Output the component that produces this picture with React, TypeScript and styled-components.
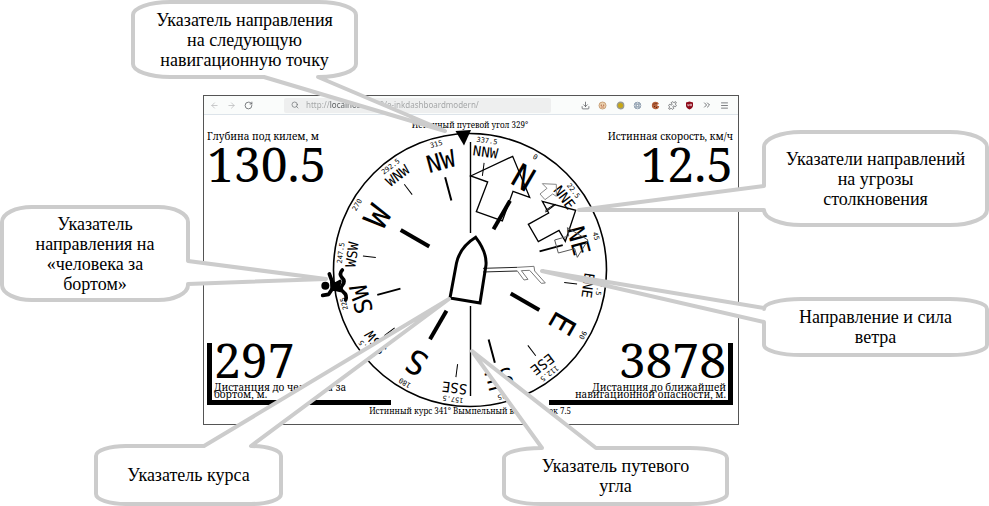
import React from "react";
import styled, { createGlobalStyle } from "styled-components";
import {
  ArrowLeft,
  ArrowRight,
  RotateCw,
  Search,
  Download,
  ChevronsRight,
  Menu,
  Puzzle,
} from "lucide-react";

const GlobalStyle = createGlobalStyle`
  *, *::before, *::after { box-sizing: border-box; }
  body { margin: 0; background: #fff; color: #000; }
`;

const serif = `"Noto Serif", "Droid Serif", "Liberation Serif", serif`;

const Stage = styled.main`
  position: relative;
  min-height: 506px;
  padding-top: 95px;
  overflow: hidden;
`;

const BrowserWindow = styled.section`
  width: 536px;
  margin-left: calc(round(down, 50%, 1px) - 291px);
  border: 1px solid #555;
  background: #fff;
  font-family: ${serif};
`;

const Toolbar = styled.header`
  display: flex;
  align-items: center;
  height: 19px;
  padding: 0 5px 0 2px;
  background: #fafcfb;
  border-bottom: 1px solid #dde4ea;
`;

const Extensions = styled.div`
  display: flex;
  justify-content: space-between;
  width: 156px;
`;

const ToolButton = styled.button<{ $dim?: boolean }>`
  display: flex;
  align-items: center;
  justify-content: center;
  width: 17px;
  height: 16px;
  padding: 0;
  border: 0;
  background: none;
  color: ${(p) => (p.$dim ? "#b8babb" : "#55585c")};
`;

const AddressBar = styled.label`
  display: flex;
  align-items: center;
  gap: 7px;
  flex: 1;
  height: 15px;
  margin: 0 26px 0 27px;
  padding-left: 7px;
  border-radius: 2px;
  background: #eeefef;
  color: #66696c;
`;

const AddressInput = styled.input`
  flex: 1;
  min-width: 0;
  padding: 0;
  border: 0;
  outline: 0;
  font: 8px/14px "Noto Sans", sans-serif;
  color: transparent;
  background: linear-gradient(90deg, #a0a2a3 24px, #55585a 24px, #55585a 60px, #a0a2a3 60px);
  -webkit-background-clip: text;
  background-clip: text;
`;

const Dashboard = styled.div`
  display: grid;
  grid-template-columns: 1fr 1fr;
  grid-template-rows: auto 1fr;
  padding: 4px 5px 7px 3px;
`;

const Instrument = styled.div`
  grid-area: 1 / 1 / 3 / 3;
  display: flex;
  flex-direction: column;
  align-items: center;
`;

const Caption = styled.p`
  margin: 0;
  font-size: 8px;
  line-height: 12px;
  white-space: nowrap;
`;

const Dial = styled.svg`
  display: block;
  width: 300px;
  height: 274px;
  overflow: visible;
`;

const Mark = styled.text<{ $size: number }>`
  font-family: "DejaVu Sans Mono", monospace;
  font-size: ${(p) => p.$size}px;
  text-anchor: middle;
`;

const Readout = styled.div<{ $end?: boolean }>`
  padding-top: 10px;
  text-align: ${(p) => (p.$end ? "right" : "left")};
  grid-area: 1 / ${(p) => (p.$end ? 2 : 1)};
`;

const ReadoutLabel = styled.div`
  font-size: 10px;
  line-height: 14px;
`;

const Value = styled.div`
  font-size: 48px;
  line-height: 41px;
`;

const FramedReadout = styled.div<{ $end?: boolean }>`
  grid-area: 2 / ${(p) => (p.$end ? 2 : 1)};
  align-self: end;
  justify-self: ${(p) => (p.$end ? "end" : "start")};
  width: 184px;
  margin-bottom: 12px;
  padding: 0 2px;
  border: solid #000;
  border-width: ${(p) => (p.$end ? "0 5px 5px 0" : "0 0 5px 5px")};
  text-align: ${(p) => (p.$end ? "right" : "left")};
`;

const FramedValue = styled.div`
  font-size: 48px;
  line-height: 34px;
`;

const FramedLabel = styled.div`
  font-size: 10px;
  line-height: 7px;
  padding: 7px 0 2px;
  white-space: nowrap;
`;

const CalloutBox = styled.aside<{ $x: number; $y: number; $w: number; $h: number }>`
  position: absolute;
  left: calc(round(down, 50%, 1px) + ${(p) => p.$x}px);
  top: ${(p) => p.$y}px;
  width: ${(p) => p.$w}px;
  height: ${(p) => p.$h}px;
  display: flex;
  align-items: center;
  justify-content: center;
`;

const Outline = styled.svg`
  position: absolute;
  inset: 0;
  overflow: visible;
  fill: #fff;
  stroke: #ccc;
  stroke-width: 4;
  stroke-linejoin: round;
  pointer-events: none;
`;

const CalloutText = styled.p`
  position: relative;
  margin: 0;
  font: 18px/20px "Liberation Serif", serif;
  text-align: center;
  white-space: nowrap;
`;

type Pt = [number, number];

interface CalloutSpec {
  x: number;
  y: number;
  w: number;
  h: number;
  rx: number;
  ry: number;
  side: "top" | "bottom" | "left" | "right";
  pointer: [Pt, Pt, Pt];
  lines: string[];
}

function bubblePath({ w, h, rx, ry, side, pointer }: CalloutSpec) {
  const tail = pointer.map(([px, py]) => `L${px} ${py}`).join(" ");
  const at = (s: CalloutSpec["side"]) => (s === side ? tail : "");
  const arc = (x: number, y: number) => `A${rx} ${ry} 0 0 1 ${x} ${y}`;
  return [
    `M${rx} 0`, at("top"), `L${w - rx} 0`, arc(w, ry),
    at("right"), `L${w} ${h - ry}`, arc(w - rx, h),
    at("bottom"), `L${rx} ${h}`, arc(0, h - ry),
    at("left"), `L0 ${ry}`, arc(rx, 0), "Z",
  ].join(" ");
}

function Callout(spec: CalloutSpec) {
  return (
    <CalloutBox $x={spec.x} $y={spec.y} $w={spec.w} $h={spec.h}>
      <Outline width={spec.w} height={spec.h} aria-hidden="true">
        <path d={bubblePath(spec)} />
      </Outline>
      <CalloutText>
        {spec.lines.map((line, i) => (
          <React.Fragment key={line}>
            {i > 0 && <br />}
            {line}
          </React.Fragment>
        ))}
      </CalloutText>
    </CalloutBox>
  );
}

const callouts: CalloutSpec[] = [
  {
    x: -361, y: 2, w: 223, h: 75, rx: 37, ry: 13, side: "bottom",
    pointer: [[185, 75], [312, 129], [131, 75]],
    lines: ["Указатель направления", "на следующую", "навигационную точку"],
  },
  {
    x: -492, y: 207, w: 186, h: 93, rx: 30, ry: 15, side: "right",
    pointer: [[186, 54], [324, 72], [186, 77]],
    lines: ["Указатель", "направления на", "«человека за", "бортом»"],
  },
  {
    x: -398, y: 446, w: 185, h: 58, rx: 30, ry: 10, side: "top",
    pointer: [[108, 0], [353, -147], [155, 0]],
    lines: ["Указатель курса"],
  },
  {
    x: 10, y: 448, w: 223, h: 56, rx: 37, ry: 10, side: "top",
    pointer: [[38, 0], [-32, -97], [92, 0]],
    lines: ["Указатель путевого", "угла"],
  },
  {
    x: 270, y: 132, w: 223, h: 93, rx: 37, ry: 15, side: "left",
    pointer: [[0, 78], [-185, 78], [0, 54]],
    lines: ["Указатели направлений", "на угрозы", "столкновения"],
  },
  {
    x: 270, y: 299, w: 223, h: 56, rx: 37, ry: 10, side: "left",
    pointer: [[0, 23], [-222, -28], [0, 9]],
    lines: ["Направление и сила", "ветра"],
  },
];

const points = [
  "N", "NNE", "NE", "ENE", "E", "ESE", "SE", "SSE",
  "S", "SSW", "SW", "WSW", "W", "WNW", "NW", "NNW",
];

const markStyles = {
  1: { size: 33, base: 95, from: 47, to: 80, stroke: 4 },
  2: { size: 24, base: 104, from: 72, to: 96, stroke: 2 },
  3: { size: 14, base: 114, from: 95, to: 108, stroke: 1 },
} as const;

function CompassRose() {
  return (
    <g transform="translate(471 270) rotate(30)">
      {points.map((name, i) => {
        const m = markStyles[name.length as 1 | 2 | 3];
        return (
          <g key={name} transform={`rotate(${i * 22.5})`}>
            <line y1={-m.from} y2={-m.to} stroke="#000" strokeWidth={m.stroke} />
            <Mark $size={m.size} y={-m.base}>{name}</Mark>
            <Mark $size={7} y={-128}>{String(i * 22.5)}</Mark>
          </g>
        );
      })}
    </g>
  );
}

function DialFace() {
  return (
    <Dial viewBox="321 131 300 274" role="img" aria-label="Компас">
      <circle cx="471" cy="270" r="136.5" fill="none" stroke="#000" strokeWidth="1.6" />
      <path d="M471.5 142V233M471.5 306V396" stroke="#000" strokeWidth="1.4" />
      <CompassRose />
      {/* collision threats */}
      <g transform="translate(465 125) scale(.33333)" fill="none" stroke="#000" strokeWidth="4">
        <path d="M20 153 146 94 197 217 147 199 115 288 37 260 71 171Z" />
        <path d="M235 229 335 256 304 349 285 316 223 350 193 298 254 264Z" />
        <path d="M244 256 272 238" strokeWidth="3" />
        <path d="M235 176 277 178 277 214 266 207 243 224 228 207 249 190Z" stroke="#888" strokeWidth="3" />
        <path d="M272 345 314 333 310 308 372 345 340 397 332 371 283 384Z" stroke="#555" strokeWidth="3" />
      </g>
      {/* wind barb */}
      <g transform="translate(465 260) scale(.33333)" fill="none" strokeWidth="3">
        <path d="M57 25 160 22M57 36 160 33" stroke="#222" />
        <path d="M160 22 210 19 212 33 244 69 232 70 197 31 172 32 192 58 180 60 160 33" stroke="#777" />
      </g>
      {/* own ship */}
      <path
        d="M451 298 457.5 263Q461 247 476.7 237.3 488 252 487 265L481 303Z"
        fill="none" stroke="#000" strokeWidth="3"
      />
      {/* next waypoint */}
      <path d="M456.5 131 472 130 465 145.500Z" />
      {/* man overboard */}
      <g
        transform="translate(315 260) scale(.33333)" fill="none" stroke="#000"
        strokeWidth="11" strokeLinecap="round" strokeLinejoin="round"
      >
        <circle cx="34" cy="77" r="12" fill="#000" stroke="none" />
        <path d="M46 42 55 66M26 106 44 103 55 86" />
        <path d="M53 66 64 72 78 64 74 78 80 92 64 88 54 88Z" fill="#000" strokeWidth="10" />
        <path d="M85 30Q74 42 84 53 96 64 85 76 76 87 88 96 100 105 95 120" />
      </g>
    </Dial>
  );
}

const ext = { width: 9, height: 9, viewBox: "0 0 9 9" };

export default function App() {
  return (
    <>
      <GlobalStyle />
      <Stage>
        <BrowserWindow>
          <Toolbar>
            <ToolButton $dim aria-label="Назад"><ArrowLeft size={9} /></ToolButton>
            <ToolButton $dim aria-label="Вперёд"><ArrowRight size={9} /></ToolButton>
            <ToolButton aria-label="Обновить"><RotateCw size={9} /></ToolButton>
            <AddressBar aria-label="Адрес">
              <Search size={8} />
              <AddressInput defaultValue="http://localhost:8080/e-inkdashboardmodern/" />
            </AddressBar>
            <Extensions>
              <ToolButton aria-label="Загрузки"><Download size={9} /></ToolButton>
              <ToolButton aria-label="Обезьянка">
                <svg {...ext}>
                  <circle cx="4.500" cy="4.500" r="3.500" fill="#ecd2b0" stroke="#c9a27a" />
                  <circle cx="3.300" cy="4.200" r=".6" fill="#a0522d" />
                  <circle cx="5.700" cy="4.200" r=".6" fill="#a0522d" />
                  <path d="M3 6h3" stroke="#c0603a" strokeWidth=".7" />
                </svg>
              </ToolButton>
              <ToolButton aria-label="Состояние">
                <svg {...ext}>
                  <circle cx="4.500" cy="4.500" r="3.200" fill="#c8a814" stroke="#999a90" strokeWidth="1.400" />
                </svg>
              </ToolButton>
              <ToolButton aria-label="Сеть">
                <svg {...ext} fill="none" stroke="#8797a8" strokeWidth=".8">
                  <circle cx="4.500" cy="4.500" r="3.300" />
                  <circle cx="4.500" cy="4.500" r="1.200" />
                  <path d="M1 3h7M1 6h7M3 1v7M6 1v7" />
                </svg>
              </ToolButton>
              <ToolButton aria-label="Cookie">
                <svg {...ext}>
                  <path d="M4.500 .8A3.700 3.700 0 1 0 8.200 5L6.500 5 6.400 3.500 8 3A3.700 3.700 0 0 0 4.500 .8Z" fill="#b5603a" />
                  <path d="M2.500 3h1M3 5.500h1M5 6.500h1M4.500 2.500h1" stroke="#5a2712" />
                </svg>
              </ToolButton>
              <ToolButton aria-label="Расширения"><Puzzle size={9} /></ToolButton>
              <ToolButton aria-label="Защита">
                <svg {...ext}>
                  <path d="M4.500 .5 8 1.500V4.500Q8 7 4.500 8.500 1 7 1 4.500V1.500Z" fill="#8e0b1a" />
                  <path d="M2.800 3v1.700h1.300V3M5.300 3.200h1.200v1.500H5.300Z" fill="none" stroke="#fff" strokeWidth=".6" />
                </svg>
              </ToolButton>
              <ToolButton aria-label="Ещё"><ChevronsRight size={10} /></ToolButton>
              <ToolButton aria-label="Меню"><Menu size={9} /></ToolButton>
            </Extensions>
          </Toolbar>
          <Dashboard>
            <Instrument>
              <Caption>Истинный путевой угол 329°</Caption>
              <DialFace />
              <Caption>Истинный курс 341° Вымпельный ветер, м/сек 7.5</Caption>
            </Instrument>
            <Readout>
              <ReadoutLabel>Глубина под килем, м</ReadoutLabel>
              <Value>130.5</Value>
            </Readout>
            <Readout $end>
              <ReadoutLabel>Истинная скорость, км/ч</ReadoutLabel>
              <Value>12.5</Value>
            </Readout>
            <FramedReadout>
              <FramedValue>297</FramedValue>
              <FramedLabel>Дистанция до человека за<br />бортом, м.</FramedLabel>
            </FramedReadout>
            <FramedReadout $end>
              <FramedValue>3878</FramedValue>
              <FramedLabel>Дистанция до ближайшей<br />навигационной опасности, м.</FramedLabel>
            </FramedReadout>
          </Dashboard>
        </BrowserWindow>
        {callouts.map((c) => (
          <Callout key={c.lines[0]} {...c} />
        ))}
      </Stage>
    </>
  );
}
